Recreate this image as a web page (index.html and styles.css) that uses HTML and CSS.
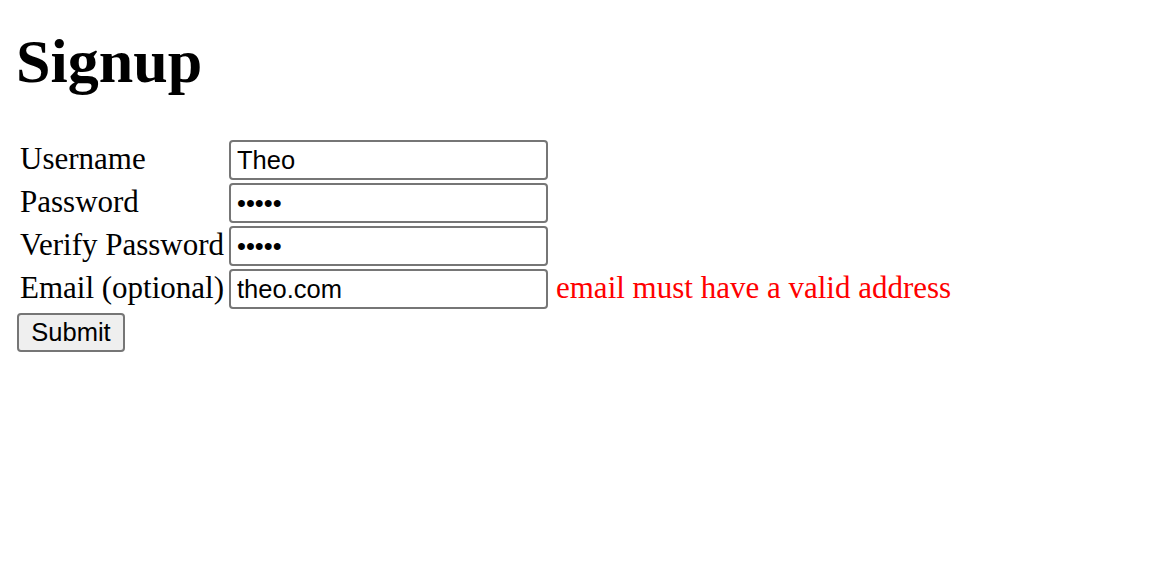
FILE: index.html
```html
<!DOCTYPE html>
<html>
<head>
<meta charset="utf-8">
<title>Signup</title>
<link rel="stylesheet" href="styles.css">
</head>
<body>
<div class="page">
  <h1 class="title">Signup</h1>
  <form class="signup">
    <div class="fields">
      <label class="label" for="username">Username</label>
      <input class="field" id="username" type="text" value="Theo">
      <span class="error"></span>

      <label class="label" for="password">Password</label>
      <input class="field" id="password" type="password" value="12345">
      <span class="error"></span>

      <label class="label" for="verify">Verify Password</label>
      <input class="field" id="verify" type="password" value="12345">
      <span class="error"></span>

      <label class="label" for="email">Email (optional)</label>
      <input class="field" id="email" type="text" value="theo.com">
      <span class="error">email must have a valid address</span>
    </div>
    <button class="submit" type="button">Submit</button>
  </form>
</div>
</body>
</html>
```

FILE: styles.css
```css
html, body {
  margin: 0;
  padding: 0;
  background: #ffffff;
}

.page {
  padding: 28px 0 0 16px;
  font-family: "Liberation Serif", "Times New Roman", serif;
  color: #000000;
}

.title {
  margin: 0;
  font-size: 62px;
  line-height: 66px;
  font-weight: bold;
}

.signup {
  margin-top: 46px;
  margin-left: 1px;
}

.fields {
  display: grid;
  grid-template-columns: 212px 319px auto;
  row-gap: 3px;
}

.label {
  font-size: 31px;
  line-height: 34px;
  margin-top: 2px;
  padding-left: 3px;
  white-space: nowrap;
}

.field {
  box-sizing: border-box;
  width: 319px;
  height: 40px;
  margin: 0;
  padding: 0 6px;
  border: 2px solid #767676;
  border-radius: 4px;
  font-family: "Liberation Sans", Arial, sans-serif;
  font-size: 25.5px;
  color: #000000;
  background: #ffffff;
  outline: none;
}

.error {
  font-size: 31px;
  line-height: 34px;
  margin-top: 2px;
  padding-left: 8px;
  color: #ff0000;
  white-space: nowrap;
}

.submit {
  box-sizing: border-box;
  width: 108px;
  height: 39px;
  margin-top: 4px;
  padding: 0;
  border: 2px solid #767676;
  border-radius: 4px;
  background: #efefef;
  font-family: "Liberation Sans", Arial, sans-serif;
  font-size: 25.5px;
  color: #000000;
}
```
